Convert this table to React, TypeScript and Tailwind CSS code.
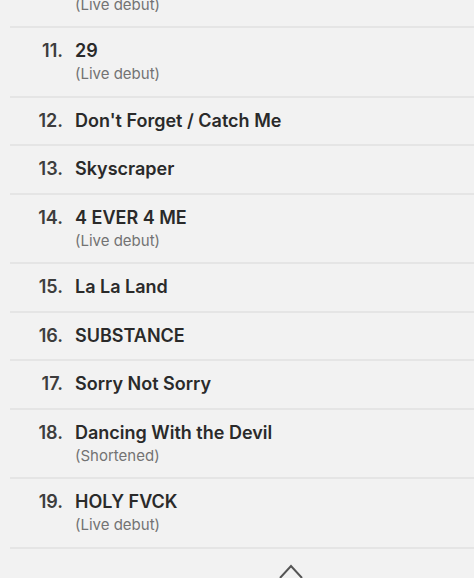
type Song = {
  n: number;
  title: string;
  note?: string;
};

const songs: Song[] = [
  { n: 10, title: "Freak", note: "(Live debut)" },
  { n: 11, title: "29", note: "(Live debut)" },
  { n: 12, title: "Don't Forget / Catch Me" },
  { n: 13, title: "Skyscraper" },
  { n: 14, title: "4 EVER 4 ME", note: "(Live debut)" },
  { n: 15, title: "La La Land" },
  { n: 16, title: "SUBSTANCE" },
  { n: 17, title: "Sorry Not Sorry" },
  { n: 18, title: "Dancing With the Devil", note: "(Shortened)" },
  { n: 19, title: "HOLY FVCK", note: "(Live debut)" },
];

function SongRow({ song }: { song: Song }) {
  return (
    <li className="ml-[10px] flex border-b-2 border-[#e5e5e5] py-[11.25px]">
      <span className="w-[53px] shrink-0 text-right text-[18px] leading-[24px] font-semibold text-[#3d3d3d]">
        {song.n}.
      </span>
      <div className="ml-[12px] flex flex-col">
        <span className="text-[18px] leading-[24px] font-semibold text-[#2a2a2a]">{song.title}</span>
        {song.note && (
          <span className="text-[15px] leading-[21px] text-[#737373]">{song.note}</span>
        )}
      </div>
    </li>
  );
}

export default function App() {
  return (
    <div
      className="flex h-[578px] w-[474px] flex-col overflow-hidden bg-[#f2f2f2]"
      style={{ fontFamily: "Inter, 'Open Sans', sans-serif" }}
    >
      <ul className="-mt-[41.5px]">
        {songs.map((s) => (
          <SongRow key={s.n} song={s} />
        ))}
      </ul>
      <div className="flex flex-1 justify-center pt-[14px] pl-[108px]">
        {/* scroll-to-top chevron, cut off by the bottom edge */}
        <svg width="26" height="16" viewBox="0 0 26 16" fill="none" className="shrink-0">
          <path d="M2 15 L13 3 L24 15" stroke="#555" strokeWidth="2" strokeLinejoin="miter" />
        </svg>
      </div>
      <div className="h-[2px] bg-white" />
    </div>
  );
}
